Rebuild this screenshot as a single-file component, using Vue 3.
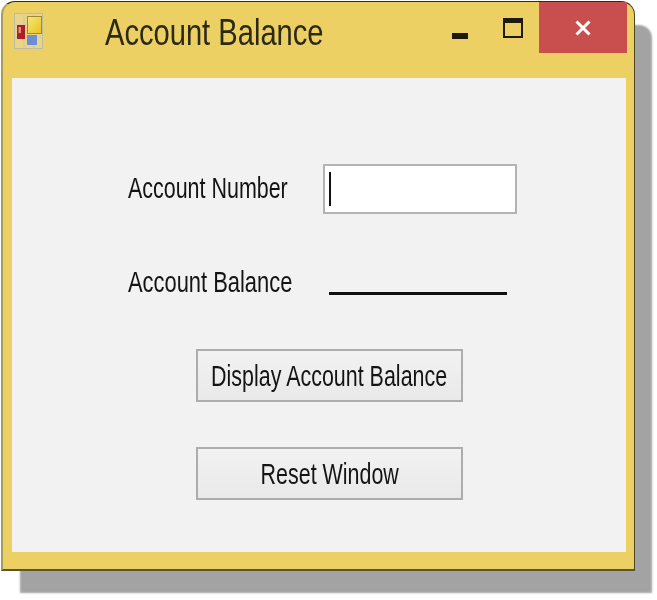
<script setup>
const title = 'Account Balance'
</script>

<template>
  <div class="page">
    <div class="window">
      <header class="titlebar">
        <svg class="app-icon" viewBox="0 0 29 36" aria-hidden="true">
          <defs>
            <linearGradient id="yel" x1="0" y1="0" x2="1" y2="1">
              <stop offset="0" stop-color="#f6e680" />
              <stop offset="1" stop-color="#e8c414" />
            </linearGradient>
          </defs>
          <rect x="0.5" y="0.5" width="28" height="35" fill="#e8d588" stroke="#bdb9a4" />
          <path d="M0 12H29M0 24H29M10 0V36M20 0V36" stroke="#cdc8a8" stroke-width="1" />
          <rect x="13.5" y="3.5" width="14" height="17" fill="url(#yel)" stroke="#a08a2c" />
          <rect x="3" y="12" width="8" height="14" fill="#ad1f27" />
          <rect x="4.5" y="14" width="2.5" height="6" fill="#e58a84" />
          <rect x="13" y="22" width="10" height="10" fill="#6c8ed2" />
        </svg>
        <h1 class="title"><span class="squeeze-title">{{ title }}</span></h1>
        <div class="controls">
          <span class="min"></span>
          <span class="max"></span>
          <span class="close">
            <svg viewBox="0 0 16 16" width="16" height="16" aria-hidden="true">
              <path d="M1.5 1.5L14.5 14.5M14.5 1.5L1.5 14.5" stroke="#fff" stroke-width="3" fill="none" />
            </svg>
          </span>
        </div>
      </header>
      <main class="client">
        <div class="row first">
          <label class="label"><span class="squeeze">Account Number</span></label>
          <div class="input"><span class="caret"></span></div>
        </div>
        <div class="row second">
          <span class="label"><span class="squeeze wider">Account Balance</span></span>
          <span class="result"></span>
        </div>
        <button class="btn display"><span class="squeeze center">Display Account Balance</span></button>
        <button class="btn reset"><span class="squeeze center">Reset Window</span></button>
      </main>
    </div>
  </div>
</template>

<style>
html, body { margin: 0; background: #fff; }
</style>

<style scoped>
.page {
  width: 657px;
  height: 600px;
  padding: 1px 0 0 1px;
  box-sizing: border-box;
  background: #fff;
  overflow: hidden;
}
.window {
  width: 634px;
  height: 570px;
  box-sizing: border-box;
  display: flex;
  flex-direction: column;
  background: #edd063;
  border-radius: 14px 14px 0 0;
  border-top: 1px solid #2f2b17;
  border-right: 1px solid #4d4623;
  border-bottom: 2px solid #5d5530;
  border-left: 2px solid #a89c5c;
  box-shadow: 18px 23px 2px -1px #a3a3a3;
  padding: 0 8px 17px 9px;
  font-family: "Liberation Sans", sans-serif;
  color: #141414;
  filter: blur(0.45px);
}
.titlebar {
  height: 76px;
  flex: none;
  display: flex;
  align-items: flex-start;
}
.app-icon {
  width: 29px;
  height: 36px;
  margin: 11px 0 0 2px;
  flex: none;
}
.title {
  margin: 8px 0 0 62px;
  font-size: 37px;
  line-height: 46px;
  font-weight: 400;
  color: #2d2a12;
  width: 220px;
  white-space: nowrap;
}
.squeeze-title {
  display: inline-block;
  transform: scaleX(0.787);
  transform-origin: left center;
}
.controls {
  margin-left: auto;
  margin-right: -1px;
  display: flex;
  align-items: flex-start;
}
.min {
  width: 16px;
  height: 6px;
  margin: 31px 35px 0 0;
  background: #1d1a0a;
}
.max {
  width: 20px;
  height: 20px;
  box-sizing: border-box;
  margin: 16px 16px 0 0;
  border: 2px solid #1d1a0a;
  border-top-width: 5px;
}
.close {
  width: 88px;
  height: 51px;
  background: #c94f4f;
  display: flex;
  align-items: center;
  justify-content: center;
  padding-right: 1px;
  box-sizing: border-box;
}
.client {
  flex: 1;
  background: #f3f2f2;
  padding: 86px 0 0 116px;
  display: flex;
  flex-direction: column;
  align-items: flex-start;
}
.row {
  display: flex;
  align-items: flex-start;
}
.label {
  width: 195px;
  font-size: 30px;
  line-height: 30px;
  margin-top: 9px;
  white-space: nowrap;
}
.squeeze {
  display: inline-block;
  transform: scaleX(0.715);
  transform-origin: left center;
  white-space: nowrap;
}
.squeeze.wider {
  transform: scaleX(0.73);
}
.squeeze.center {
  transform-origin: center center;
}
.input {
  width: 194px;
  height: 50px;
  box-sizing: border-box;
  background: #fff;
  border: 2px solid #b4b4b4;
  padding: 6px 0 0 4px;
}
.caret {
  display: block;
  width: 2px;
  height: 34px;
  background: #111;
}
.second {
  margin-top: 44px;
}
.second .label {
  width: 201px;
}
.result {
  width: 178px;
  height: 3px;
  margin-top: 34px;
  background: #111;
}
.btn {
  width: 267px;
  height: 53px;
  margin-left: 68px;
  padding: 0;
  box-sizing: border-box;
  background: linear-gradient(#f2f2f2, #e9e9e9);
  border: 2px solid #adadad;
  border-radius: 0;
  font: inherit;
  font-size: 30px;
  color: #141414;
  overflow: hidden;
  display: flex;
  align-items: center;
  justify-content: center;
}
.display {
  margin-top: 52px;
}
.reset {
  margin-top: 45px;
}
</style>
